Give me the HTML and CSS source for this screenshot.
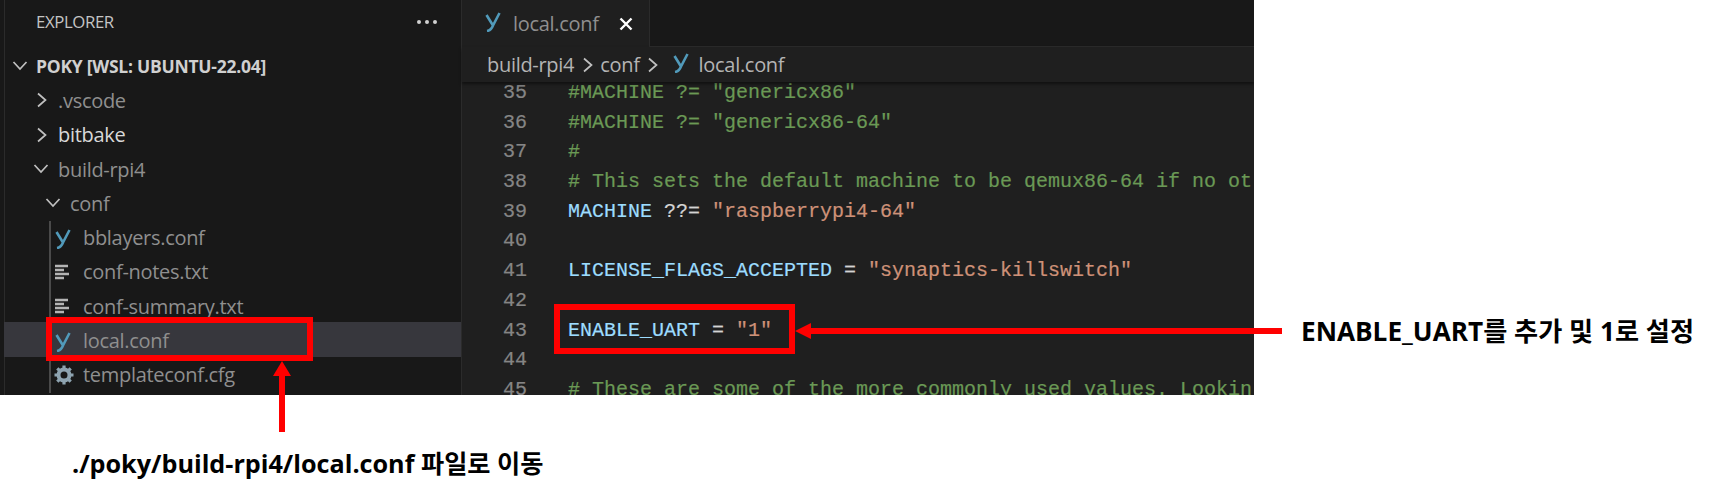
FILE: index.html
```html
<!DOCTYPE html>
<html lang="ko">
<head>
<meta charset="utf-8">
<title>local.conf</title>
<link rel="stylesheet" href="styles.css">
</head>
<body>
<svg class="defs" width="0" height="0" aria-hidden="true">
  <defs>
    <symbol id="ico-y" viewBox="0 0 16 20"><path d="M1.500 3 L8 13.500 M14.500 1 L8 13.500 Q6 18.500 2 19" fill="none" stroke="#519aba" stroke-width="2.600"/></symbol>
    <symbol id="ico-right" viewBox="0 0 12 16"><path d="M2 1.500 L9.500 8 L2 14.500" fill="none" stroke="#c0c0c0" stroke-width="1.700"/></symbol>
    <symbol id="ico-down" viewBox="0 0 16 12"><path d="M1.500 2 L8 9 L14.500 2" fill="none" stroke="#c0c0c0" stroke-width="1.700"/></symbol>
    <symbol id="ico-lines" viewBox="0 0 15 16"><path d="M0 2h13M0 6h9M0 10h14M0 14h9" fill="none" stroke="#b4b4b4" stroke-width="2.400"/></symbol>
  </defs>
</svg>
<div class="shot">
  <aside class="sidebar">
    <div class="side-head"><span>EXPLORER</span><span class="dots"><i></i><i></i><i></i></span></div>
    <div class="row root"><svg class="chev-down"><use href="#ico-down"/></svg><span>POKY [WSL: UBUNTU-22.04]</span></div>
    <div class="row lvl1"><svg class="chev-right"><use href="#ico-right"/></svg><span class="dim">.vscode</span></div>
    <div class="row lvl1"><svg class="chev-right"><use href="#ico-right"/></svg><span class="bright">bitbake</span></div>
    <div class="row lvl1"><svg class="chev-down"><use href="#ico-down"/></svg><span class="dim">build-rpi4</span></div>
    <div class="row lvl2"><svg class="chev-down"><use href="#ico-down"/></svg><span class="dim">conf</span></div>
    <div class="files">
      <div class="row file"><svg class="fi"><use href="#ico-y"/></svg><span class="dim">bblayers.conf</span></div>
      <div class="row file"><svg class="fi-lines"><use href="#ico-lines"/></svg><span class="dim">conf-notes.txt</span></div>
      <div class="row file"><svg class="fi-lines"><use href="#ico-lines"/></svg><span class="dim">conf-summary.txt</span></div>
      <div class="row file selected"><svg class="fi"><use href="#ico-y"/></svg><span class="dim">local.conf</span></div>
      <div class="row file"><svg class="fi-gear" viewBox="0 0 20 20"><circle cx="10" cy="10" r="5.500" fill="none" stroke="#8ea3b0" stroke-width="4"/><path d="M10 0.500v4M10 15.500v4M0.500 10h4M15.500 10h4M3.300 3.300l2.800 2.800M13.900 13.900l2.800 2.800M3.300 16.700l2.800-2.800M13.900 6.100l2.800-2.800" stroke="#8ea3b0" stroke-width="3.200"/></svg><span class="dim">templateconf.cfg</span></div>
    </div>
  </aside>
  <main class="editor">
    <div class="tabs">
      <div class="tab"><svg class="fi"><use href="#ico-y"/></svg><span class="tab-name">local.conf</span><svg class="close" viewBox="0 0 14 14"><path d="M1.500 1.500l11 11M12.500 1.500l-11 11" stroke="#fff" stroke-width="2.400"/></svg></div>
    </div>
    <div class="crumbs"><span class="crumb">build-rpi4</span><svg class="sep sep-first"><use href="#ico-right"/></svg><span class="crumb">conf</span><svg class="sep"><use href="#ico-right"/></svg><svg class="fi crumb-ico"><use href="#ico-y"/></svg><span class="crumb">local.conf</span></div>
    <div class="code">
      <div class="line"><span class="num">35</span><span class="c">#MACHINE ?= "genericx86"</span></div>
      <div class="line"><span class="num">36</span><span class="c">#MACHINE ?= "genericx86-64"</span></div>
      <div class="line"><span class="num">37</span><span class="c">#</span></div>
      <div class="line"><span class="num">38</span><span class="c"># This sets the default machine to be qemux86-64 if no ot</span></div>
      <div class="line"><span class="num">39</span><span class="v">MACHINE</span><span class="o"> ??= </span><span class="s">"raspberrypi4-64"</span></div>
      <div class="line"><span class="num">40</span></div>
      <div class="line"><span class="num">41</span><span class="v">LICENSE_FLAGS_ACCEPTED</span><span class="o"> = </span><span class="s">"synaptics-killswitch"</span></div>
      <div class="line"><span class="num">42</span></div>
      <div class="line"><span class="num">43</span><span class="v">ENABLE_UART</span><span class="o"> = </span><span class="s">"1"</span></div>
      <div class="line"><span class="num">44</span></div>
      <div class="line"><span class="num">45</span><span class="c"># These are some of the more commonly used values. Lookin</span></div>
    </div>
  </main>
</div>

<div class="mark mark-file"></div>
<div class="mark mark-line"></div>
<div class="arrow-up"><div class="head-up"></div><div class="shaft-v"></div></div>
<div class="arrow-left"><div class="head-left"></div><div class="shaft-h"></div></div>
<div class="note note-bottom">./poky/build-rpi4/local.conf 파일로 이동</div>
<div class="note note-right">ENABLE_UART를 추가 및 1로 설정</div>
</body>
</html>
```
FILE: styles.css
```css
* { box-sizing: border-box; }
html, body { margin: 0; padding: 0; background: #fff; }
body { position: relative; width: 1715px; height: 493px; overflow: hidden; }
.defs { position: absolute; }

.shot {
  display: flex;
  width: 1254px;
  height: 395px;
  overflow: hidden;
  background: #181818;
}

.sidebar {
  width: 462px;
  flex: none;
  padding-left: 4px;
  background: #181818;
  border-right: 1px solid #2b2b2b;
  font-family: "Open Sans", "Noto Sans", sans-serif;
  font-size: 20px;
  letter-spacing: -0.300px;
  color: #8f8f8f;
}
.sidebar::before {
  content: "";
  position: absolute;
  left: 4px;
  top: 0;
  width: 1px;
  height: 395px;
  background: #2b2b2b;
}
.side-head {
  height: 48px;
  padding: 0 24px 5px 32px;
  display: flex;
  align-items: center;
  justify-content: space-between;
  font-size: 16.800px;
  color: #c4c4c4;
  letter-spacing: -0.400px;
}
.dots { display: flex; gap: 4px; }
.dots i { width: 4px; height: 4px; border-radius: 50%; background: #d0d0d0; }

.row {
  height: 34.300px;
  padding-top: 2px;
  display: flex;
  align-items: center;
  white-space: nowrap;
}
.root {
  padding-left: 8px;
  font-size: 17.500px;
  font-weight: 700;
  color: #d0d0d0;
  letter-spacing: -0.250px;
}
.root .chev-down { margin-right: 8px; }
.lvl1 { padding-left: 30px; }
.lvl1 .chev-right { margin-right: 10px; margin-left: 2px; }
.lvl1 .chev-down { margin-right: 9px; margin-left: -1px; }
.lvl2 { padding-left: 41px; }
.lvl2 .chev-down { margin-right: 9px; }
.dim { color: #8f8f8f; }
.bright { color: #d8d8d8; }

.chev-right { width: 12px; height: 16px; flex: none; }
.chev-down { width: 16px; height: 12px; flex: none; }

.files { position: relative; }
.files::before {
  content: "";
  position: absolute;
  left: 45px;
  top: 2px;
  bottom: -2px;
  width: 2px;
  background: #4a4a4a;
}
.file { padding-left: 51px; }
.selected { background: #37373d; }
.fi { width: 16px; height: 20px; flex: none; margin-top: 2px; margin-right: 12px; }
.fi-lines { width: 15px; height: 16px; flex: none; margin: 0 13px 0 0; }
.fi-gear { width: 20px; height: 20px; flex: none; margin: 0 9px 0 -1px; }

.editor {
  flex: 1;
  min-width: 0;
  background: #1f1f1f;
  display: flex;
  flex-direction: column;
}
.tabs {
  height: 47px;
  flex: none;
  background: #181818;
  border-bottom: 1px solid #2b2b2b;
  display: flex;
}
.tab {
  width: 188px;
  height: 47px;
  background: #1f1f1f;
  border-right: 1px solid #2b2b2b;
  display: flex;
  align-items: center;
  padding-left: 24px;
  font-family: "Open Sans", "Noto Sans", sans-serif;
  font-size: 20px;
  letter-spacing: -0.300px;
  color: #8f8f8f;
}
.tab .fi { margin-top: -4px; margin-right: 12px; margin-left: -1px; }
.tab-name { margin-right: 20px; }
.close { width: 14px; height: 14px; flex: none; }

.crumbs {
  height: 35px;
  flex: none;
  position: relative;
  z-index: 1;
  background: #1f1f1f;
  box-shadow: 0 2px 3px rgba(0, 0, 0, 0.500);
  display: flex;
  align-items: center;
  padding-left: 25px;
  font-family: "Open Sans", "Noto Sans", sans-serif;
  font-size: 20px;
  letter-spacing: -0.300px;
  color: #b4b4b4;
}
.sep { width: 12px; height: 16px; flex: none; margin: 0 5px 0 7px; }
.sep-first { margin: 0 6px 0 8px; }
.crumb-ico { margin: -4px 10px 0 9px; }

.code {
  margin-top: -4px;
  font-family: "Liberation Mono", "DejaVu Sans Mono", monospace;
  font-size: 20px;
  -webkit-text-stroke: 0.2px;
}
.line {
  height: 29.700px;
  line-height: 29.700px;
  display: flex;
  white-space: pre;
}
.num {
  width: 65px;
  margin-right: 41px;
  flex: none;
  text-align: right;
  color: #858585;
}
.c { color: #6a9955; }
.v { color: #9cdcfe; }
.o { color: #d4d4d4; }
.s { color: #ce9178; }

/* annotations drawn over the screenshot */
.mark { position: absolute; border: 6px solid #ff0000; }
.mark-file { left: 46px; top: 317px; width: 267px; height: 44px; }
.mark-line { left: 554px; top: 304px; width: 241px; height: 50px; }

.arrow-up { position: absolute; left: 273px; top: 361px; width: 18px; display: flex; flex-direction: column; align-items: center; }
.head-up { width: 0; height: 0; border-left: 9px solid transparent; border-right: 9px solid transparent; border-bottom: 15px solid #ff0000; }
.shaft-v { width: 6px; height: 56px; background: #ff0000; }

.arrow-left { position: absolute; left: 795px; top: 322px; height: 17px; display: flex; align-items: center; }
.head-left { width: 0; height: 0; border-top: 8.500px solid transparent; border-bottom: 8.500px solid transparent; border-right: 16px solid #ff0000; }
.shaft-h { width: 471px; height: 6px; background: #ff0000; }

.note {
  position: absolute;
  font-family: "Open Sans", "Noto Sans CJK KR", sans-serif;
  font-weight: 700;
  color: #000;
  white-space: nowrap;
  line-height: 30px;
}
.note-bottom { left: 72px; top: 448px; font-size: 25.200px; }
.note-right { left: 1301px; top: 316px; font-size: 26.200px; }
```
